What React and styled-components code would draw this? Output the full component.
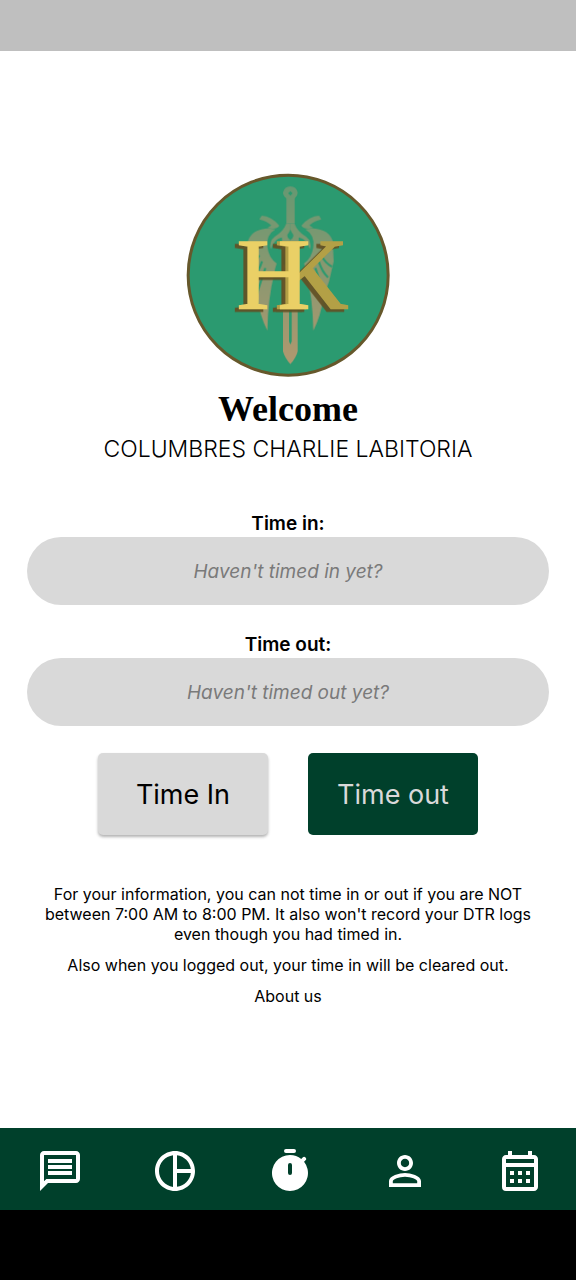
import React from 'react';
import styled, { createGlobalStyle } from 'styled-components';

const Global = createGlobalStyle`
  *, *::before, *::after { box-sizing: border-box; }
  body { margin: 0; background: #fff; color: #000; font-family: Inter, "Liberation Sans", sans-serif; }
  h1, p { margin: 0; }
`;

const Screen = styled.div`
  min-height: 100vh;
  display: flex;
  flex-direction: column;
`;

const StatusBar = styled.div`
  height: 51px;
  background: #bfbfbf;
`;

const Main = styled.main`
  flex: 1;
  display: flex;
  flex-direction: column;
  align-items: center;
  padding: 122px 27px 0;
  text-align: center;
`;

const Logo = styled.svg`
  width: 204px;
  height: 204px;
  display: block;
`;

const Letters = styled.g`
  font-family: "Liberation Serif", serif;
  font-size: 306px;
  stroke-width: 5px;
  filter: drop-shadow(-12px 8px 0 rgba(98, 80, 36, 0.93));
`;

const Title = styled.h1`
  margin-top: 10px;
  font: 700 36px/44px "Liberation Serif", serif;
`;

const Name = styled.p`
  margin-top: 2px;
  font-size: 23px;
  line-height: 32px;
  font-weight: 300;
`;

const Form = styled.form`
  width: 100%;
  margin-top: 46px;
  display: flex;
  flex-direction: column;
  gap: 27px;
`;

const Field = styled.div`
  display: flex;
  flex-direction: column;
`;

const Label = styled.label`
  font-size: 19px;
  line-height: 26px;
  font-weight: 600;
`;

const TimeBox = styled.input`
  width: 100%;
  height: 68px;
  border: 0;
  border-radius: 34px;
  background: #d9d9d9;
  text-align: center;
  font: italic 400 19px Inter, sans-serif;
  &::placeholder { color: #7a7a7a; opacity: 1; }
`;

const Actions = styled.div`
  display: flex;
  justify-content: center;
  gap: 40px;
`;

const ActionButton = styled.button`
  width: 170px;
  height: 82px;
  padding: 0;
  border: 0;
  border-radius: 5px;
  font: 400 27px Inter, sans-serif;
  background: ${(p) => (p.$dark ? '#00402b' : '#d9d9d9')};
  color: ${(p) => (p.$dark ? '#d9d9d9' : '#000')};
  box-shadow: ${(p) => (p.$dark ? 'none' : '0 2px 3px rgba(0, 0, 0, 0.3)')};
`;

const Notes = styled.div`
  margin-top: 49px;
  padding: 0 8px;
  display: flex;
  flex-direction: column;
  align-items: center;
  gap: 11px;
  font-size: 16px;
  line-height: 20px;
`;

const AboutLink = styled.a`
  color: inherit;
  text-decoration: none;
`;

const TabBar = styled.nav`
  height: 82px;
  display: grid;
  grid-template-columns: repeat(5, 1fr);
  background: #00402b;
`;

const Tab = styled.button`
  display: flex;
  align-items: center;
  justify-content: center;
  padding: 3px 0 0 4px;
  border: 0;
  background: none;
  color: #fff;
  svg { width: 48px; height: 48px; fill: currentColor; }
`;

const SystemBar = styled.div`
  height: 70px;
  background: #000;
`;

const tabs = [
  { label: 'Messages', icon: <path d="M4 4h16v12H5.17L4 17.17V4m0-2c-1.1 0-1.99.9-1.99 2L2 22l4-4h14c1.1 0 2-.9 2-2V4c0-1.1-.9-2-2-2H4zm2 10h12v2H6v-2zm0-3h12v2H6V9zm0-3h12v2H6V6z" /> },
  { label: 'Reports', icon: <path d="M12 2C6.48 2 2 6.48 2 12s4.48 10 10 10 10-4.48 10-10S17.52 2 12 2zm1 2.07c3.61.45 6.48 3.33 6.93 6.93H13V4.07zM4 12c0-4.06 3.07-7.44 7-7.93v15.87c-3.93-.5-7-3.88-7-7.94zm9 7.93V13h6.93c-.45 3.61-3.32 6.48-6.93 6.93z" /> },
  { label: 'Timer', icon: <path fillRule="evenodd" d="M10 1h4a1 1 0 0 1 0 2h-4a1 1 0 0 1 0-2zM12 4c2.12 0 4.07.74 5.62 1.97l.72-.72a1 1 0 0 1 1.42 1.42l-.73.72A9 9 0 1 1 12 4zm0 4a1 1 0 0 0-1 1v4a1 1 0 0 0 2 0V9a1 1 0 0 0-1-1z" /> },
  { label: 'Profile', icon: <path d="M12 5.9c1.16 0 2.1.94 2.1 2.1s-.94 2.1-2.1 2.1S9.900 9.160 9.900 8s.94-2.1 2.1-2.1m0 9c2.970 0 6.100 1.460 6.100 2.100v1.100H5.900V17c0-.64 3.130-2.100 6.100-2.100M12 4C9.790 4 8 5.790 8 8s1.790 4 4 4 4-1.790 4-4-1.790-4-4-4zm0 9c-2.670 0-8 1.340-8 4v3h16v-3c0-2.660-5.330-4-8-4z" /> },
  { label: 'Calendar', icon: <path d="M19 4h-1V2h-2v2H8V2H6v2H5c-1.11 0-1.99.9-1.99 2L3 20a2 2 0 0 0 2 2h14c1.1 0 2-.9 2-2V6c0-1.1-.9-2-2-2zm0 16H5V10h14v10zm0-12H5V6h14v2zM9 14H7v-2h2v2zm4 0h-2v-2h2v2zm4 0h-2v-2h2v2zm-8 4H7v-2h2v2zm4 0h-2v-2h2v2zm4 0h-2v-2h2v2z" /> },
];

const Wing = () => (
  <>
    <path d="M238 164L245 153Q274 154 298 183Q290 196 262 190L274 182Q260 168 238 164Z" />
    <path d="M204 228Q216 194 262 191L286 194Q258 210 262 246Q266 280 290 296Q284 312 282 330Q264 400 262 498Q238 450 233 400L215 350L201 290Z" />
    <path d="M319 176Q310 200 284 216Q266 230 272 254Q282 222 306 218V254L320 300H331V226Q321 220 322 210Q327 204 331 194V176Z" />
    <path d="M238 272Q226 296 206 306M246 290Q236 322 218 338M256 310Q242 350 230 390" fill="none" stroke="#2b9a70" strokeWidth="6" />
  </>
);

const Crest = () => (
  <Logo viewBox="18 25 612 612" role="img" aria-label="HK crest">
    <defs>
      <linearGradient id="blade" gradientUnits="userSpaceOnUse" x1="0" y1="65" x2="0" y2="598">
        <stop offset="0" stopColor="#6f9873" />
        <stop offset="1" stopColor="#c09870" />
      </linearGradient>
    </defs>
    <circle cx="324.500" cy="331.500" r="300" fill="#2b9a70" stroke="#66582b" strokeWidth="9" />
    <g fill="url(#blade)" opacity="0.9">
      <Wing />
      <g transform="matrix(-1 0 0 1 662 0)"><Wing /></g>
      <path fillRule="evenodd" d="M319 177V101Q309 94 309 84Q313 65 331 65Q349 65 353 84Q353 94 344 101V177ZM331 79L324 86L331 93L338 86Z" />
      <path fillRule="evenodd" d="M309 300H353V560Q348 580 331 598Q314 580 309 560ZM327 430V530L331 540L335 530V430Z" />
    </g>
    <Letters>
      <text x="284" y="432" fill="#b3a046" stroke="#b3a046">K</text>
      <text x="170" y="432" fill="#ead066" stroke="#ead066">H</text>
    </Letters>
  </Logo>
);

export default function App() {
  return (
    <>
      <Global />
      <Screen>
        <StatusBar />
        <Main>
          <Crest />
          <Title>Welcome</Title>
          <Name>COLUMBRES CHARLIE LABITORIA</Name>
          <Form onSubmit={(e) => e.preventDefault()}>
            <Field>
              <Label htmlFor="time-in">Time in:</Label>
              <TimeBox id="time-in" readOnly placeholder="Haven't timed in yet?" />
            </Field>
            <Field>
              <Label htmlFor="time-out">Time out:</Label>
              <TimeBox id="time-out" readOnly placeholder="Haven't timed out yet?" />
            </Field>
            <Actions>
              <ActionButton type="button">Time In</ActionButton>
              <ActionButton type="button" $dark>Time out</ActionButton>
            </Actions>
          </Form>
          <Notes>
            <p>
              For your information, you can not time in or out if you are NOT between 7:00 AM to
              8:00 PM. It also won't record your DTR logs even though you had timed in.
            </p>
            <p>Also when you logged out, your time in will be cleared out.</p>
            <AboutLink href="#about">About us</AboutLink>
          </Notes>
        </Main>
        <TabBar>
          {tabs.map((t) => (
            <Tab key={t.label} type="button" aria-label={t.label}>
              <svg viewBox="0 0 24 24" aria-hidden="true">{t.icon}</svg>
            </Tab>
          ))}
        </TabBar>
        <SystemBar />
      </Screen>
    </>
  );
}
